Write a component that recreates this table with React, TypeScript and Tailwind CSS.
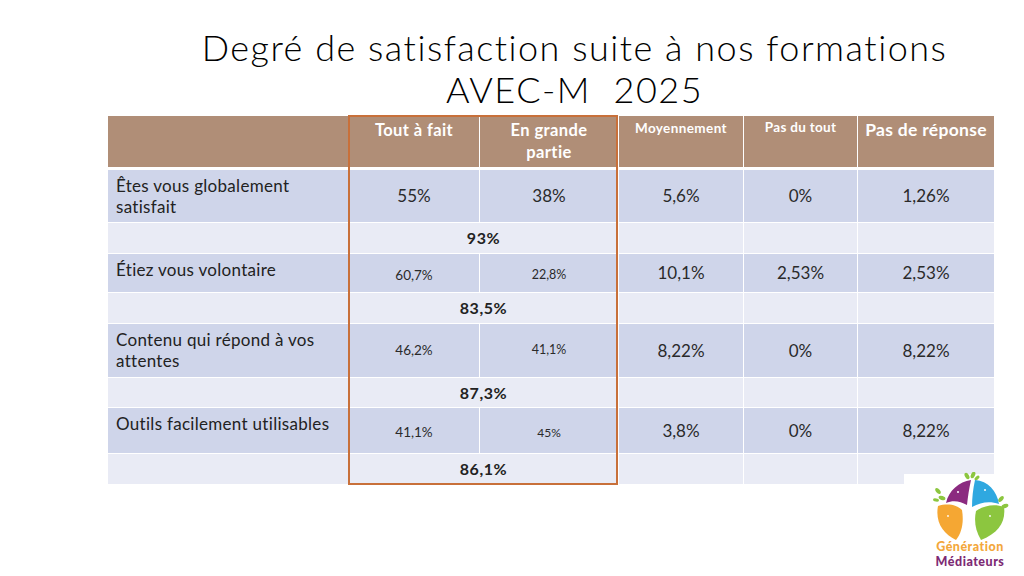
import React from "react";

const GRID =
  "grid grid-cols-[240px_130px_138px_124px_113px_136px] gap-x-px";

const HEAD = "bg-[#b08e77] text-white font-bold text-center";
const DARK = "bg-[#cfd5ea]";
const LIGHT = "bg-[#e9ebf5]";

type Num = { v: string; size: string };

function DataRow({
  label,
  h,
  nums,
}: {
  label: React.ReactNode;
  h: string;
  nums: Num[];
}) {
  return (
    <div className={`${GRID} ${h}`}>
      <div className={`${DARK} pl-2 pr-1 pt-[5px] text-[17px] leading-[21px] tracking-[0.3px] text-[#222]`}>
        {label}
      </div>
      {nums.map((n, i) => (
        <div
          key={i}
          className={`${DARK} flex items-center justify-center text-[#2a2a2a] ${n.size}`}
        >
          {n.v}
        </div>
      ))}
    </div>
  );
}

function TotalRow({ v, h }: { v: string; h: string }) {
  return (
    <div className={`${GRID} ${h}`}>
      <div className={LIGHT} />
      <div
        className={`${LIGHT} col-span-2 flex items-center justify-center text-[16px] tracking-[0.6px] font-bold text-[#222]`}
      >
        {v}
      </div>
      <div className={LIGHT} />
      <div className={LIGHT} />
      <div className={LIGHT} />
    </div>
  );
}

function Logo() {
  return (
    <div className="absolute left-[904px] top-[474px] w-[120px] h-[102px] bg-white">
      <svg
        className="absolute left-[26px] top-[-2px]"
        width="80"
        height="70"
        viewBox="0 0 80 70"
      >
        <ellipse cx="37" cy="4" rx="2" ry="3.5" fill="#8cc63f" transform="rotate(-30 37 4)" />
        <ellipse cx="43" cy="3" rx="2" ry="3.5" fill="#8cc63f" transform="rotate(25 43 3)" />
        <ellipse cx="47" cy="6" rx="1.6" ry="3" fill="#8cc63f" transform="rotate(50 47 6)" />
        <ellipse cx="8" cy="19" rx="2" ry="3.5" fill="#8cc63f" transform="rotate(-40 8 19)" />
        <ellipse cx="12" cy="26" rx="2" ry="3.5" fill="#8cc63f" transform="rotate(-70 12 26)" />
        <ellipse cx="6" cy="28" rx="1.6" ry="3" fill="#8cc63f" transform="rotate(-80 6 28)" />
        <ellipse cx="71" cy="27" rx="2" ry="3.5" fill="#8cc63f" transform="rotate(40 71 27)" />
        <ellipse cx="75" cy="34" rx="2" ry="3.5" fill="#8cc63f" transform="rotate(70 75 34)" />
        <path
          d="M16 31 C19 18 29 10 41 8 C39 17 38 24 37 33 C30 29 23 28 16 31 Z"
          fill="#8b2a80"
        />
        <path
          d="M45 8 C58 9 67 19 69 32 C60 29 51 30 42 35 C42 26 43 17 45 8 Z"
          fill="#2fa8e0"
        />
        <path
          d="M8 34 C18 31 27 33 32 38 C34 50 32 60 26 68 C13 62 5 50 8 34 Z"
          fill="#f5a733"
        />
        <path
          d="M46 39 C55 33 65 32 74 35 C76 49 69 61 51 68 C45 58 44 48 46 39 Z"
          fill="#8cc63f"
        />
        <circle cx="28" cy="20" r="1" fill="#ffffff" />
        <circle cx="55" cy="18" r="1" fill="#ffffff" />
        <circle cx="18" cy="44" r="0.9" fill="#ffffff" />
        <circle cx="60" cy="44" r="0.9" fill="#ffffff" />
      </svg>
      <div className="absolute left-[20px] top-[65px] w-[92px] flex flex-col items-center font-['Lato',sans-serif] font-black">
        <div className="text-[12.5px] leading-[15px] tracking-[0.5px] text-[#f3a73b]">Génération</div>
        <div className="text-[12.5px] leading-[15px] tracking-[0.5px] text-[#7d2a74]">Médiateurs</div>
      </div>
    </div>
  );
}

export default function App() {
  return (
    <div className="relative w-[1024px] h-[576px] overflow-hidden bg-white font-['Lato',sans-serif] text-[#222]">
      <div className="pl-[125px] pt-[26px] text-center font-light text-[36px] leading-[42px] tracking-[1.5px] text-black">
        <div>Degré de satisfaction suite à nos formations</div>
        <div>AVEC-M&nbsp; 2025</div>
      </div>

      <div className="relative ml-[108px] mt-[6px] w-[886px] flex flex-col gap-y-px">
        <div className={`${GRID} h-[51px] mb-[2px]`}>
          <div className={HEAD} />
          <div className={`${HEAD} pt-[4px] text-[16.5px] tracking-[0.4px] leading-[21px]`}>Tout à fait</div>
          <div className={`${HEAD} pt-[3px] text-[16.5px] tracking-[0.4px] leading-[22px]`}>
            En grande
            <br />
            partie
          </div>
          <div className={`${HEAD} pt-[4px] text-[13.5px] tracking-[0.4px] leading-[17px]`}>Moyennement</div>
          <div className={`${HEAD} pt-[3px] text-[13.5px] tracking-[0.3px] leading-[17px]`}>Pas du tout</div>
          <div className={`${HEAD} pt-[3px] text-[17.5px] tracking-[0.3px] leading-[22px]`}>Pas de réponse</div>
        </div>

        <DataRow
          h="h-[52px]"
          label={
            <>
              Êtes vous globalement
              <br />
              satisfait
            </>
          }
          nums={[
            { v: "55%", size: "text-[17px]" },
            { v: "38%", size: "text-[17px]" },
            { v: "5,6%", size: "text-[17px]" },
            { v: "0%", size: "text-[17px]" },
            { v: "1,26%", size: "text-[17px]" },
          ]}
        />
        <TotalRow h="h-[30px]" v="93%" />
        <DataRow
          h="h-[38px]"
          label="Étiez vous volontaire"
          nums={[
            { v: "60,7%", size: "text-[13.5px] pt-[4px]" },
            { v: "22,8%", size: "text-[12.5px] pt-[4px]" },
            { v: "10,1%", size: "text-[17px]" },
            { v: "2,53%", size: "text-[17px]" },
            { v: "2,53%", size: "text-[17px]" },
          ]}
        />
        <TotalRow h="h-[30px]" v="83,5%" />
        <DataRow
          h="h-[53px]"
          label={
            <>
              Contenu qui répond à vos
              <br />
              attentes
            </>
          }
          nums={[
            { v: "46,2%", size: "text-[13.5px]" },
            { v: "41,1%", size: "text-[12.5px]" },
            { v: "8,22%", size: "text-[17px]" },
            { v: "0%", size: "text-[17px]" },
            { v: "8,22%", size: "text-[17px]" },
          ]}
        />
        <TotalRow h="h-[29px]" v="87,3%" />
        <DataRow
          h="h-[45px]"
          label="Outils facilement utilisables"
          nums={[
            { v: "41,1%", size: "text-[13.5px] pt-[4px]" },
            { v: "45%", size: "text-[12px] pt-[4px]" },
            { v: "3,8%", size: "text-[17px]" },
            { v: "0%", size: "text-[17px]" },
            { v: "8,22%", size: "text-[17px]" },
          ]}
        />
        <TotalRow h="h-[30px]" v="86,1%" />

        <div className="pointer-events-none absolute left-[240px] top-[-1px] w-[270px] h-[370px] border-2 border-[#c8703a]" />
      </div>

      <Logo />
    </div>
  );
}
